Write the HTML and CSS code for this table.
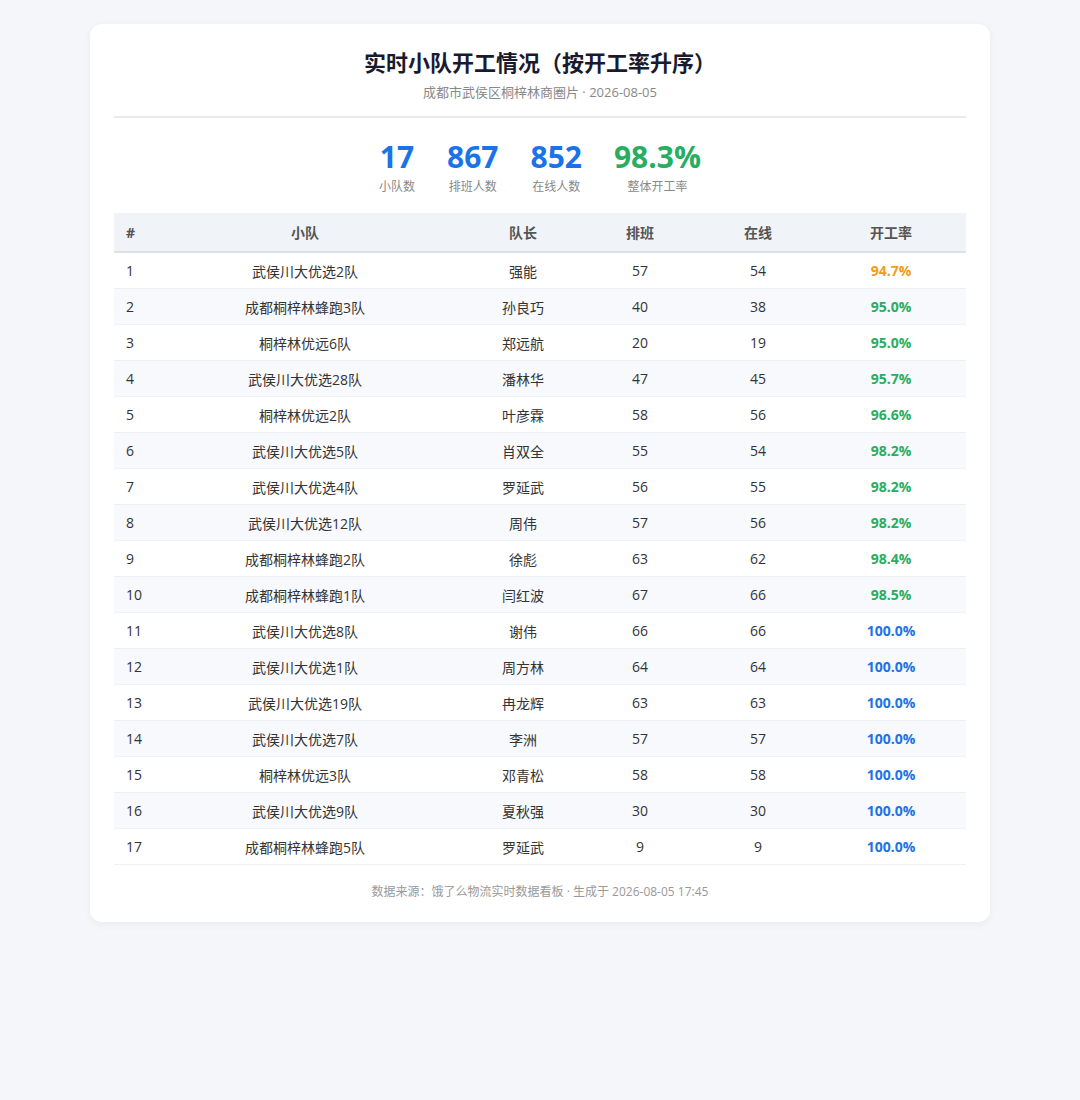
FILE: index.html
```html
<!DOCTYPE html>
<html lang="zh">
<head>
<meta charset="utf-8">
<title>实时小队开工情况</title>
<link rel="stylesheet" href="styles.css">
</head>
<body>
<div class="card">
  <div class="header">
    <h1 class="title">实时小队开工情况（按开工率升序）</h1>
    <div class="subtitle">成都市武侯区桐梓林商圈片 · 2026-08-05</div>
  </div>
  <div class="stats">
    <div class="stat"><div class="num blue">17</div><div class="label">小队数</div></div>
    <div class="stat"><div class="num blue">867</div><div class="label">排班人数</div></div>
    <div class="stat"><div class="num blue">852</div><div class="label">在线人数</div></div>
    <div class="stat"><div class="num green">98.3%</div><div class="label">整体开工率</div></div>
  </div>
  <table class="tbl">
    <colgroup>
      <col class="c-idx"><col class="c-team"><col class="c-lead"><col class="c-sch"><col class="c-on"><col class="c-rate">
    </colgroup>
    <thead>
      <tr><th class="left">#</th><th>小队</th><th>队长</th><th>排班</th><th>在线</th><th>开工率</th></tr>
    </thead>
    <tbody>
      <tr><td class="left">1</td><td>武侯川大优选2队</td><td>强能</td><td>57</td><td>54</td><td class="rate orange">94.7%</td></tr>
      <tr><td class="left">2</td><td>成都桐梓林蜂跑3队</td><td>孙良巧</td><td>40</td><td>38</td><td class="rate green">95.0%</td></tr>
      <tr><td class="left">3</td><td>桐梓林优远6队</td><td>郑远航</td><td>20</td><td>19</td><td class="rate green">95.0%</td></tr>
      <tr><td class="left">4</td><td>武侯川大优选28队</td><td>潘林华</td><td>47</td><td>45</td><td class="rate green">95.7%</td></tr>
      <tr><td class="left">5</td><td>桐梓林优远2队</td><td>叶彦霖</td><td>58</td><td>56</td><td class="rate green">96.6%</td></tr>
      <tr><td class="left">6</td><td>武侯川大优选5队</td><td>肖双全</td><td>55</td><td>54</td><td class="rate green">98.2%</td></tr>
      <tr><td class="left">7</td><td>武侯川大优选4队</td><td>罗延武</td><td>56</td><td>55</td><td class="rate green">98.2%</td></tr>
      <tr><td class="left">8</td><td>武侯川大优选12队</td><td>周伟</td><td>57</td><td>56</td><td class="rate green">98.2%</td></tr>
      <tr><td class="left">9</td><td>成都桐梓林蜂跑2队</td><td>徐彪</td><td>63</td><td>62</td><td class="rate green">98.4%</td></tr>
      <tr><td class="left">10</td><td>成都桐梓林蜂跑1队</td><td>闫红波</td><td>67</td><td>66</td><td class="rate green">98.5%</td></tr>
      <tr><td class="left">11</td><td>武侯川大优选8队</td><td>谢伟</td><td>66</td><td>66</td><td class="rate blue">100.0%</td></tr>
      <tr><td class="left">12</td><td>武侯川大优选1队</td><td>周方林</td><td>64</td><td>64</td><td class="rate blue">100.0%</td></tr>
      <tr><td class="left">13</td><td>武侯川大优选19队</td><td>冉龙辉</td><td>63</td><td>63</td><td class="rate blue">100.0%</td></tr>
      <tr><td class="left">14</td><td>武侯川大优选7队</td><td>李洲</td><td>57</td><td>57</td><td class="rate blue">100.0%</td></tr>
      <tr><td class="left">15</td><td>桐梓林优远3队</td><td>邓青松</td><td>58</td><td>58</td><td class="rate blue">100.0%</td></tr>
      <tr><td class="left">16</td><td>武侯川大优选9队</td><td>夏秋强</td><td>30</td><td>30</td><td class="rate blue">100.0%</td></tr>
      <tr><td class="left">17</td><td>成都桐梓林蜂跑5队</td><td>罗延武</td><td>9</td><td>9</td><td class="rate blue">100.0%</td></tr>
    </tbody>
  </table>
  <div class="footer">数据来源：饿了么物流实时数据看板 · 生成于 2026-08-05 17:45</div>
</div>
</body>
</html>
```

FILE: styles.css
```css
html, body {
  margin: 0;
  padding: 0;
}
body {
  background: #f5f6fa;
  font-family: "Open Sans", "Noto Sans CJK SC", sans-serif;
  color: #333;
  padding: 24px 0;
}
.card {
  width: 852px;
  margin: 0 auto;
  background: #fff;
  border-radius: 12px;
  padding: 20px 24px 21px;
  box-shadow: 0 2px 10px rgba(0, 0, 0, 0.05);
}
.header {
  text-align: center;
  padding-bottom: 14px;
  border-bottom: 2px solid #e8eaee;
}
.title {
  margin: 0;
  font-size: 22px;
  font-weight: 700;
  color: #1a1a2e;
  line-height: 36px;
}
.subtitle {
  font-size: 13px;
  color: #888;
  line-height: 20px;
  margin-top: 2px;
}
.stats {
  display: flex;
  justify-content: center;
  gap: 32px;
  padding: 20px 0 17px;
}
.stat {
  text-align: center;
}
.num {
  font-size: 30px;
  font-weight: 700;
  line-height: 38px;
}
.label {
  font-size: 12px;
  color: #888;
  line-height: 18px;
  margin-top: 2px;
}
.blue { color: #1a73e8; }
.green { color: #27ae60; }
.orange { color: #f39c12; }
.tbl {
  width: 852px;
  border-collapse: collapse;
  table-layout: fixed;
  font-size: 14px;
}
.c-idx { width: 30px; }
.c-team { width: 322px; }
.c-lead { width: 114px; }
.c-sch { width: 120px; }
.c-on { width: 116px; }
.c-rate { width: 150px; }
.tbl th {
  background: #f0f3f7;
  color: #555;
  font-weight: 700;
  font-size: 14px;
  height: 38px;
  padding: 0 12px;
  text-align: center;
  border-bottom: 2px solid #dde1e7;
}
.tbl td {
  height: 35px;
  padding: 0 12px;
  text-align: center;
  color: #333;
  border-bottom: 1px solid #eef0f3;
}
.tbl th.left, .tbl td.left {
  text-align: left;
}
.tbl tbody tr:nth-child(even) td {
  background: #f8f9fc;
}
.tbl td.rate {
  font-weight: 700;
}
.tbl td.rate.orange { color: #f39c12; }
.tbl td.rate.green { color: #27ae60; }
.tbl td.rate.blue { color: #1a73e8; }
.footer {
  text-align: center;
  font-size: 12px;
  color: #999;
  margin-top: 18px;
  line-height: 18px;
}
```
